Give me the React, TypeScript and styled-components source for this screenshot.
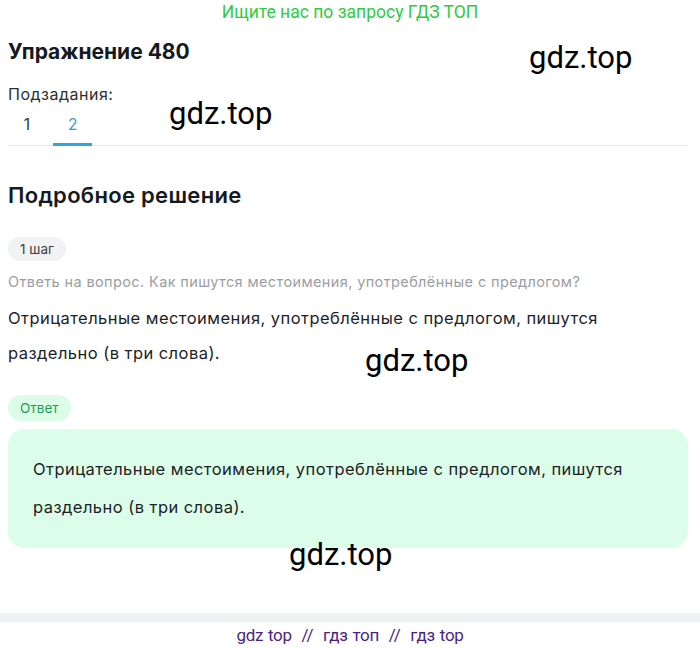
import React from "react";
import styled, { createGlobalStyle } from "styled-components";

const Global = createGlobalStyle`
  html, body { margin: 0; padding: 0; background: #fff; }
  body { font-family: Inter, "Noto Sans", sans-serif; }
`;

const Page = styled.div`
  position: relative;
  width: 700px;
  height: 650px;
  overflow: hidden;
`;

const Banner = styled.div`
  font-family: Roboto, "Liberation Sans", sans-serif;
  font-size: 17.5px;
  color: #2ecc40;
  text-align: center;
  height: 24px;
  line-height: 24px;
`;

const Content = styled.div`
  padding: 0 12px 0 8px;
  display: flex;
  flex-direction: column;
`;

const Title = styled.h1`
  margin: 13px 0 0;
  font-size: 21px;
  font-weight: 700;
  color: #141a1f;
  line-height: 30px;
`;

const SubLabel = styled.div`
  margin-top: 17px;
  font-size: 16px;
  letter-spacing: 0.5px;
  color: #2a2f33;
  line-height: 20px;
`;

const Tabs = styled.div`
  display: flex;
  gap: 7px;
  border-bottom: 1px solid #e6e8ea;
`;

const Tab = styled.div<{ $active?: boolean }>`
  min-width: 38px;
  height: 42px;
  padding: 2px 15px 0;
  display: flex;
  align-items: center;
  justify-content: center;
  font-size: 15.5px;
  color: ${(p) => (p.$active ? "#3d9ad1" : "#243a40")};
  border-bottom: 3px solid ${(p) => (p.$active ? "#27a9dc" : "transparent")};
  margin-bottom: -1px;
  box-sizing: border-box;
`;

const SectionTitle = styled.h2`
  margin: 34px 0 0;
  font-size: 22px;
  font-weight: 600;
  letter-spacing: 0.3px;
  color: #141a1f;
  line-height: 30px;
`;

const Pill = styled.div<{ $green?: boolean }>`
  align-self: flex-start;
  height: ${(p) => (p.$green ? 26 : 24)}px;
  line-height: ${(p) => (p.$green ? 26 : 24)}px;
  padding: 0 12px;
  border-radius: 13px;
  font-size: 13.5px;
  background: ${(p) => (p.$green ? "#dcfce8" : "#f1f2f4")};
  color: ${(p) => (p.$green ? "#1f9d55" : "#3a3f44")};
`;

const StepPill = styled(Pill)`
  margin-top: 27px;
`;

const AnswerPill = styled(Pill)`
  margin-top: 24px;
`;

const Question = styled.div`
  margin-top: 9px;
  font-size: 14.5px;
  letter-spacing: 0.38px;
  color: #9a9ea2;
  line-height: 24px;
`;

const Body = styled.div`
  font-size: 16.5px;
  letter-spacing: 0.45px;
  color: #1b2227;
  line-height: 35px;
  margin-top: 7px;
`;

const AnswerBox = styled.div`
  margin-top: 8px;
  background: #dcfde9;
  border-radius: 16px;
  padding: 22px 25px;
  font-size: 16.5px;
  letter-spacing: 0.45px;
  color: #1b2227;
  line-height: 37.5px;
  height: 119px;
  box-sizing: border-box;
`;

const Footer = styled.div`
  position: absolute;
  left: 0;
  right: 0;
  top: 613px;
`;

const FooterBand = styled.div`
  height: 9px;
  background: #f0f1f2;
`;

const FooterLinks = styled.div`
  font-family: Roboto, "Liberation Sans", sans-serif;
  font-size: 17px;
  color: #4a1f86;
  text-align: center;
  line-height: 26px;
  letter-spacing: -0.3px;
  word-spacing: 1px;
`;

const Watermark = styled.div<{ $x: number; $y: number }>`
  position: absolute;
  left: ${(p) => p.$x}px;
  top: ${(p) => p.$y}px;
  font-family: Roboto, "Liberation Sans", sans-serif;
  font-size: 31px;
  color: #000;
  line-height: 36px;
  pointer-events: none;
`;

export default function App() {
  return (
    <Page>
      <Global />
      <Banner>Ищите нас по запросу ГДЗ ТОП</Banner>
      <Content>
        <Title>Упражнение 480</Title>
        <SubLabel>Подзадания:</SubLabel>
        <Tabs>
          <Tab>1</Tab>
          <Tab $active>2</Tab>
        </Tabs>
        <SectionTitle>Подробное решение</SectionTitle>
        <StepPill>1 шаг</StepPill>
        <Question>Ответь на вопрос. Как пишутся местоимения, употреблённые с предлогом?</Question>
        <Body>
          Отрицательные местоимения, употреблённые с предлогом, пишутся
          <br />
          раздельно (в три слова).
        </Body>
        <AnswerPill $green>Ответ</AnswerPill>
        <AnswerBox>
          Отрицательные местоимения, употреблённые с предлогом, пишутся
          <br />
          раздельно (в три слова).
        </AnswerBox>
      </Content>
      <Watermark $x={529} $y={40}>gdz.top</Watermark>
      <Watermark $x={169} $y={96}>gdz.top</Watermark>
      <Watermark $x={365} $y={343}>gdz.top</Watermark>
      <Watermark $x={289} $y={537}>gdz.top</Watermark>
      <Footer>
        <FooterBand />
        <FooterLinks>gdz top&nbsp; //&nbsp; гдз топ&nbsp; //&nbsp; гдз top</FooterLinks>
      </Footer>
    </Page>
  );
}
